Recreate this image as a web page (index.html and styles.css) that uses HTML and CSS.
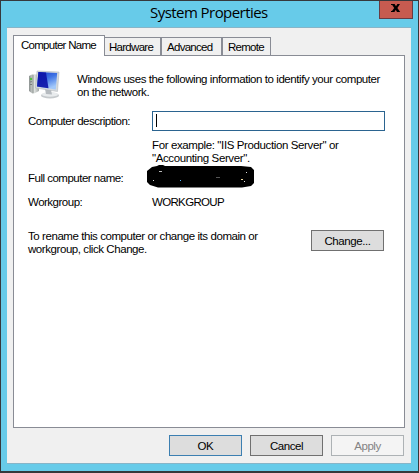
FILE: index.html
```html
<!DOCTYPE html>
<html lang="en">
<head>
<meta charset="utf-8">
<title>System Properties</title>
<link rel="stylesheet" href="styles.css">
</head>
<body>
<div class="window">
  <header class="titlebar">
    <h1 class="title">System Properties</h1>
    <button class="close" aria-label="Close"><svg width="10" height="8" viewBox="0 0 10 8"><path d="M0 0H3.6L5 2.2L6.4 0H9L6.4 4L9.2 8H6L4.8 5.8L3.4 8H0V7H1L3.2 4L1.2 1H0Z"/></svg></button>
  </header>
  <main class="client">
    <nav class="tabs">
      <button class="tab active"><span>Computer Name</span></button>
      <button class="tab hardware"><span>Hardware</span></button>
      <button class="tab advanced"><span>Advanced</span></button>
      <button class="tab remote"><span>Remote</span></button>
    </nav>
    <section class="panel">
      <div class="intro">
        <svg class="pc" width="32" height="30" viewBox="0 0 32 30">
          <defs>
            <linearGradient id="screen" x1="0" y1="0" x2="0.5" y2="1"><stop offset="0" stop-color="#1a3ccc"/><stop offset=".5" stop-color="#3f74e4"/><stop offset="1" stop-color="#a3c9fa"/></linearGradient>
            <linearGradient id="tower" x1="0" x2="1"><stop offset="0" stop-color="#8b908f"/><stop offset=".5" stop-color="#e5e8e6"/><stop offset="1" stop-color="#a5aaa9"/></linearGradient>
          </defs>
          <path d="M1 6L5 4L11 5V21L5 24L1 21Z" fill="url(#tower)"/>
          <path d="M5 5V23" stroke="#777d7b" stroke-width=".8"/>
          <path d="M2 12L4 11.6M2 14.5L4 14.5" stroke="#6b716e" stroke-width=".8"/>
          <circle cx="3" cy="9" r="1.2" fill="#4fc43c"/>
          <ellipse cx="22" cy="25.4" rx="9" ry="3" fill="#c5c9cc"/>
          <ellipse cx="22" cy="24.4" rx="8" ry="2.4" fill="#e8ebed"/>
          <path d="M17 19L23 20L24 24.5L18 24Z" fill="#b6bbc0"/>
          <path d="M9 1L31 2L29.5 21.5L7.5 18Z" fill="#d4d9dd" stroke="#aab0b5" stroke-width=".5"/>
          <path d="M10.4 2L29.2 3L27.8 19.5L9 16.5Z" fill="url(#screen)"/>
          <path d="M10.4 2L18 2.4L20.5 18.3L9 16.5Z" fill="#0c12a6" opacity=".9"/>
        </svg>
        <p class="text">Windows uses the following information to identify your computer<br>on the network.</p>
      </div>
      <dl class="fields">
        <dt class="r-desc">Computer description:</dt>
        <dd class="r-desc"><div class="input"><i class="caret"></i></div></dd>
        <dt class="r-example"></dt>
        <dd class="r-example">For example: "IIS Production Server" or<br>"Accounting Server".</dd>
        <dt class="r-name">Full computer name:</dt>
        <dd class="r-name"><svg class="redacted" width="108" height="24" viewBox="0 0 108 24"><path d="M5 2L10 1L12 0H16L18 1H94L104 2L107 5V18L104 21L95 22.5H11L3 20L0 17V6Z"/><path d="M12 6.5h3" stroke="#bbb"/><path d="M6 15.5h1M99 7.5h1M97 16.5h1" stroke="#ddd"/><path d="M33 15.5h1" stroke="#58b8ff"/><path d="M69 12.5h4" stroke="#555"/><path d="M94 14.5h2" stroke="#eed8a0"/></svg></dd>
        <dt class="r-group">Workgroup:</dt>
        <dd class="r-group">WORKGROUP</dd>
      </dl>
      <div class="rename">
        <p class="text">To rename this computer or change its domain or<br>workgroup, click Change.</p>
        <button class="button"><span>Change...</span></button>
      </div>
    </section>
    <footer class="actions">
      <button class="button default"><span>OK</span></button>
      <button class="button"><span>Cancel</span></button>
      <button class="button disabled" disabled><span>Apply</span></button>
    </footer>
  </main>
</div>
</body>
</html>
```
FILE: styles.css
```css
* { box-sizing: border-box; margin: 0; padding: 0; }
body {
  width: 419px;
  height: 473px;
  overflow: hidden;
  font: 11.5px/13px "Liberation Sans", Arial, sans-serif;
  letter-spacing: -0.43px;
  color: #000;
}
button { font: inherit; letter-spacing: inherit; color: inherit; border-radius: 0; }
.window {
  width: 419px;
  height: 473px;
  padding: 0 6px 7px;
  background: #67cbe9;
  border: 1px solid #36383c;
  border-bottom-width: 2px;
}
.titlebar { display: flex; justify-content: flex-end; height: 26px; }
.title {
  flex: 1;
  padding-left: 143px;
  font: 15px/22px "Open Sans", sans-serif;
  letter-spacing: -0.55px;
  white-space: nowrap;
}
.close {
  display: flex;
  justify-content: center;
  width: 34px;
  height: 18px;
  margin-right: -1px;
  padding-top: 3px;
  background: #c75b50;
  border: 1px solid #683b43;
  border-top: 0;
}
.client {
  width: 404px;
  height: 437px;
  padding: 7px 6px 0;
  background: #f0f0f0;
  border-top: 1px solid #87b5c8;
  border-bottom: 1px solid #87b5c8;
}
.tabs { display: flex; align-items: flex-end; height: 20px; letter-spacing: -0.72px; }
.tab {
  height: 18px;
  background: #f0f0f0;
  border: 1px solid #898c95;
  border-width: 1px 1px 0 0;
  text-align: left;
  white-space: nowrap;
  padding: 2px 0 0 4px;
}
.tab.active {
  position: relative;
  width: 92px;
  height: 21px;
  margin-bottom: -1px;
  padding: 0 0 2px 7px;
  background: #fff;
  border-left-width: 1px;
}
.hardware { width: 56px; }
.advanced { width: 61px; padding-left: 5px; border-left-width: 1px; }
.remote { width: 49px; padding-left: 5px; border-left-width: 1px; }
.panel {
  height: 373px;
  width: 392px;
  background: #fff;
  border: 1px solid #898c95;
  padding: 14px 0 0 14px;
}
.intro { display: flex; height: 41px; }
.pc { flex: none; margin-right: 17px; }
.intro .text { padding-top: 3px; }
.text { white-space: nowrap; }
.fields { display: grid; grid-template-columns: 124px 233px; grid-template-rows: 28px 26px 24px 24px; }
.fields dt, .fields dd { white-space: nowrap; }
.fields dt { letter-spacing: -0.5px; }
.fields dd { letter-spacing: -0.38px; }
.fields dd.r-group { letter-spacing: -0.66px; }
dt.r-desc { padding-top: 4px; }
dt.r-name { padding-top: 7px; }
dt.r-group, dd.r-group { padding-top: 7px; }
.input { height: 20px; border: 1px solid #2b6490; padding: 2px 0 0 3px; }
.caret { display: block; width: 1px; height: 13px; background: #000; }
.redacted { display: block; margin-left: -5px; }
.rename { display: flex; justify-content: space-between; width: 356px; padding-top: 17px; }
.button {
  width: 73px;
  height: 21px;
  padding-top: 2px;
  background: #ddd;
  border: 1px solid #707070;
  text-align: center;
}
.button.default { border-color: #3c7fb1; }
.button.disabled { background: #f4f4f4; border-color: #adb2b5; color: #838383; }
.actions { display: flex; justify-content: flex-end; gap: 8px; padding: 7px 1px 0 0; }
```
